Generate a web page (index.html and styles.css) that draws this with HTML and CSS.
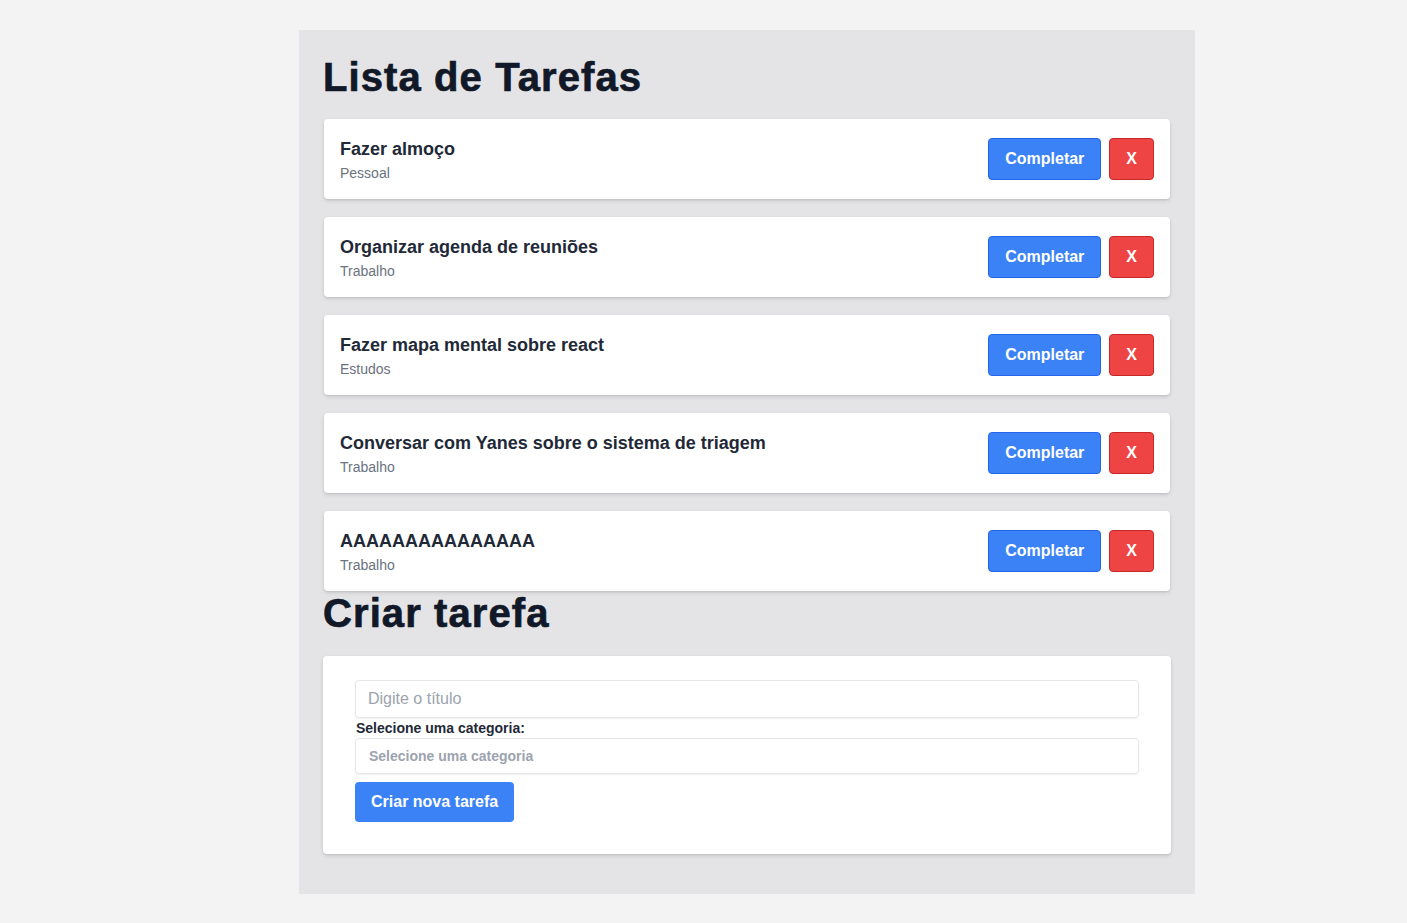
FILE: index.html
```html
<!DOCTYPE html>
<html lang="pt-BR">
<head>
<meta charset="utf-8">
<title>Lista de Tarefas</title>
<link rel="stylesheet" href="styles.css">
</head>
<body>
<div class="page">
  <main class="app">
    <h1 class="heading">Lista de Tarefas</h1>
    <div class="list">
      <div class="card">
        <div class="info"><p class="title">Fazer almoço</p><p class="cat">Pessoal</p></div>
        <div class="actions"><button class="btn btn-blue">Completar</button><button class="btn btn-red">X</button></div>
      </div>
      <div class="card">
        <div class="info"><p class="title">Organizar agenda de reuniões</p><p class="cat">Trabalho</p></div>
        <div class="actions"><button class="btn btn-blue">Completar</button><button class="btn btn-red">X</button></div>
      </div>
      <div class="card">
        <div class="info"><p class="title">Fazer mapa mental sobre react</p><p class="cat">Estudos</p></div>
        <div class="actions"><button class="btn btn-blue">Completar</button><button class="btn btn-red">X</button></div>
      </div>
      <div class="card">
        <div class="info"><p class="title">Conversar com Yanes sobre o sistema de triagem</p><p class="cat">Trabalho</p></div>
        <div class="actions"><button class="btn btn-blue">Completar</button><button class="btn btn-red">X</button></div>
      </div>
      <div class="card">
        <div class="info"><p class="title">AAAAAAAAAAAAAAA</p><p class="cat">Trabalho</p></div>
        <div class="actions"><button class="btn btn-blue">Completar</button><button class="btn btn-red">X</button></div>
      </div>
    </div>
    <h2 class="heading heading-form">Criar tarefa</h2>
    <form class="form-card">
      <input class="field" type="text" placeholder="Digite o título">
      <label class="label">Selecione uma categoria:</label>
      <select class="field select">
        <option>Selecione uma categoria</option>
      </select>
      <button type="button" class="btn btn-blue btn-create">Criar nova tarefa</button>
    </form>
  </main>
</div>
</body>
</html>
```

FILE: styles.css
```css
* { box-sizing: border-box; }

html, body {
  margin: 0;
  background: #f3f3f3;
  font-family: "Liberation Sans", Arial, sans-serif;
}

.page {
  padding: 30px 0 30px 299px;
}

.app {
  width: 896px;
  background: #e4e4e7;
  padding: 24px 24px 40px;
}

.heading {
  margin: 0 0 19px;
  font-size: 40px;
  line-height: 46px;
  font-weight: 700;
  letter-spacing: 1.1px;
  color: #111827;
  -webkit-text-stroke: 0.7px #111827;
}

.heading-form {
  margin-top: -1px;
  margin-bottom: 20px;
}

.list {
  display: flex;
  flex-direction: column;
  gap: 18px;
  margin: 0 1px;
}

.card {
  background: #fff;
  border-radius: 4px;
  box-shadow: 0 2px 4px rgba(0,0,0,0.1), 0 1px 2px rgba(0,0,0,0.08);
  padding: 16px;
  height: 80px;
  display: flex;
  align-items: center;
  justify-content: space-between;
}

.title {
  margin: 0;
  font-size: 18px;
  line-height: 28px;
  font-weight: 700;
  color: #1f2937;
}

.cat {
  margin: 0;
  font-size: 14px;
  line-height: 20px;
  color: #6b7280;
}

.actions {
  display: flex;
  gap: 8px;
}

.btn {
  font-family: "Liberation Sans", Arial, sans-serif;
  font-size: 16px;
  font-weight: 700;
  line-height: 24px;
  color: #fff;
  border-radius: 4px;
  padding: 8px 16px;
  cursor: pointer;
}

.btn-blue {
  background: #3b82f6;
  border: 1px solid #2563eb;
}

.btn-red {
  background: #ef4444;
  border: 1px solid #c62828;
}

.form-card {
  background: #fff;
  border-radius: 4px;
  box-shadow: 0 2px 4px rgba(0,0,0,0.1), 0 1px 2px rgba(0,0,0,0.08);
  padding: 24px 32px 32px;
  display: flex;
  flex-direction: column;
  align-items: flex-start;
}

.field {
  width: 100%;
  border: 1px solid #e5e7eb;
  border-radius: 4px;
  box-shadow: 0 1px 2px rgba(0,0,0,0.06);
  background: #fff;
  font-family: "Liberation Sans", Arial, sans-serif;
  outline: none;
}

.field[type="text"] {
  height: 38px;
  padding: 0 12px;
  font-size: 16px;
  color: #111827;
}

.field::placeholder {
  color: #9ca3af;
}

.label {
  font-size: 14px;
  line-height: 20px;
  font-weight: 700;
  color: #1f2937;
  padding-left: 1px;
}

.select {
  height: 36px;
  padding: 0 13px;
  font-size: 14px;
  font-weight: 700;
  color: #9ca3af;
  -webkit-appearance: none;
  appearance: none;
}

.btn-create {
  margin-top: 8px;
  height: 40px;
  border: none;
  padding: 8px 16px;
}
```
